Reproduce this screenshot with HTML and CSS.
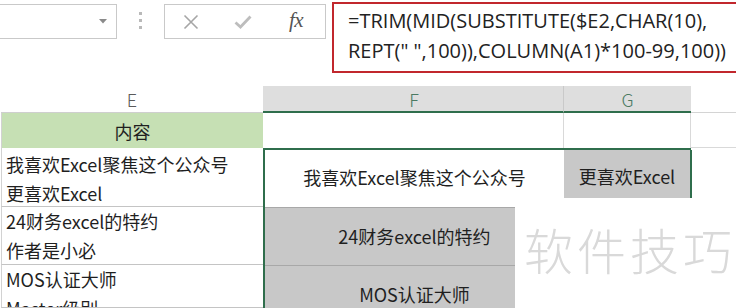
FILE: index.html
```html
<!DOCTYPE html>
<html lang="zh-CN">
<head>
<meta charset="utf-8">
<title>Excel</title>
<link rel="stylesheet" href="styles.css">
</head>
<body>
<div class="page">
  <div class="fbar">
    <div class="namebox">
      <svg class="arrow" width="8" height="5" viewBox="0 0 8 5"><path d="M0 0H8L4 4.5Z" fill="#8a8a8a"/></svg>
    </div>
    <div class="dots"><i></i><i></i><i></i></div>
    <div class="btns">
      <svg class="ico-x" width="16" height="16" viewBox="0 0 16 16"><path d="M1.5 1.5L14.5 14.5M14.5 1.5L1.5 14.5" stroke="#a6a6a6" stroke-width="1.6" fill="none"/></svg>
      <svg class="ico-ok" width="18" height="14" viewBox="0 0 18 14"><path d="M1.5 7.5L6.5 12L16.5 1.5" stroke="#bdbdbd" stroke-width="2.8" fill="none"/></svg>
      <span class="fx">fx</span>
    </div>
    <div class="formula">
      <div>=TRIM(MID(SUBSTITUTE($E2,CHAR(10),</div>
      <div>REPT(" ",100)),COLUMN(A1)*100-99,100))</div>
    </div>
  </div>
  <div class="sheet">
    <div class="hd hd-e">E</div>
    <div class="hd hd-sel hd-f">F</div>
    <div class="hd hd-sel hd-g">G</div>
    <div class="hd hd-rest"></div>

    <div class="c e-title">内容</div>
    <div class="c r1-f"></div>
    <div class="c r1-g"></div>
    <div class="c r1-rest"></div>

    <div class="c e-txt e-r2"><div>我喜欢Excel聚焦这个公众号</div><div>更喜欢Excel</div></div>
    <div class="c r2-f">我喜欢Excel聚焦这个公众号</div>
    <div class="c r2-g"><div class="g-fill">更喜欢Excel</div></div>
    <div class="c"></div>

    <div class="c e-txt"><div>24财务excel的特约</div><div>作者是小必</div></div>
    <div class="c f-gray">24财务excel的特约</div>
    <div class="c"></div>
    <div class="c"></div>

    <div class="c e-txt"><div>MOS认证大师</div><div>Master级别</div></div>
    <div class="c f-gray">MOS认证大师</div>
    <div class="c"></div>
    <div class="c"></div>
  </div>
  <div class="watermark">软件技巧</div>
</div>
</body>
</html>
```
FILE: styles.css
```css
html, body {
  margin: 0;
  padding: 0;
  background: #fff;
}
body {
  width: 736px;
  height: 308px;
  overflow: hidden;
  font-family: "Noto Sans CJK SC", "Noto Sans", sans-serif;
  color: #1f1f1f;
}
.page {
  position: relative;
  width: 736px;
  height: 308px;
  overflow: hidden;
}
.fbar {
  height: 86px;
  display: flex;
  align-items: flex-start;
}
.fbar > * {
  flex: none;
}
.namebox {
  margin-top: 4px;
  width: 107px;
  height: 33px;
  border: 1px solid #c9c9c9;
  border-left: none;
  display: flex;
  align-items: center;
  justify-content: flex-end;
  padding-right: 9px;
}
.dots {
  margin-left: 22px;
  margin-top: 12px;
  display: flex;
  flex-direction: column;
  gap: 4px;
}
.dots i {
  display: block;
  width: 3px;
  height: 3px;
  background: #b9b9b9;
}
.btns {
  margin-left: 22px;
  margin-top: 4px;
  width: 160px;
  height: 33px;
  border: 1px solid #c9c9c9;
  position: relative;
}
.ico-x { position: absolute; left: 18px; top: 9px; }
.ico-ok { position: absolute; left: 69px; top: 10px; }
.fx {
  position: absolute;
  left: 124px;
  top: 3px;
  font-family: "Liberation Serif", "DejaVu Serif", serif;
  font-style: italic;
  font-size: 21px;
  color: #555;
  letter-spacing: -0.5px;
}
.formula {
  margin-left: 6px;
  margin-top: 2px;
  height: 65px;
  width: 500px;
  border: 2px solid #c1272d;
  border-right: none;
  padding: 2px 0 0 14px;
  font-family: "Open Sans", "Noto Sans", sans-serif;
  font-size: 20px;
  line-height: 30px;
  white-space: nowrap;
  color: #222;
}
.sheet {
  display: grid;
  grid-template-columns: 262px 301px 127px 46px;
  grid-template-rows: 27px 35px 59px 58px 43px;
  padding-left: 1px;
}
.hd {
  font-size: 18px;
  font-weight: 300;
  color: #5a5a5a;
  display: flex;
  align-items: center;
  justify-content: center;
  box-sizing: border-box;
  line-height: 1;
}
.hd-e {
  border-bottom: 1px solid #cfcfcf;
}
.hd-sel {
  background: #dedede;
  border-bottom: 2px solid #2f6e4c;
  color: #4b7a62;
}
.hd-f {
  border-right: 1px solid #c9c9c9;
  padding-left: 2px;
}
.hd-rest {
  border-bottom: 1px solid #d4d4d4;
}
.c {
  box-sizing: border-box;
  font-size: 18px;
}
.e-title {
  background: #c6e0b4;
  display: flex;
  align-items: center;
  justify-content: center;
  border-left: 1px solid #d2d2d2;
}
.r1-f {
  border-right: 1px solid #d9d9d9;
}
.r1-g {
  border-right: 1px solid #d9d9d9;
}
.r1-rest {
  border-bottom: 1px solid #d9d9d9;
}
.e-txt {
  border-left: 1px solid #d2d2d2;
  border-bottom: 1px solid #c4c4c4;
  padding-left: 4px;
  line-height: 29px;
  white-space: nowrap;
  overflow: hidden;
}
.e-r2 {
  padding-top: 2px;
}
.r2-f {
  border-top: 2px solid #2f6e4c;
  border-left: 2px solid #2f6e4c;
  display: flex;
  align-items: flex-start;
  justify-content: center;
  padding-top: 17px;
  line-height: 1.2;
}
.r2-g {
  align-self: start;
  border-top: 2px solid #2f6e4c;
}
.g-fill {
  height: 48px;
  background: #c8c8c8;
  border-right: 2px solid #2f6e4c;
  display: flex;
  align-items: flex-start;
  justify-content: center;
  box-sizing: border-box;
  margin-right: -1px;
  padding-top: 16px;
  line-height: 1.2;
}
.f-gray {
  border-left: 2px solid #2f6e4c;
  background:
    linear-gradient(#a8a8a8, #a8a8a8) 0 0 / 250px 1px no-repeat,
    linear-gradient(#c8c8c8, #c8c8c8) 0 0 / 250px 100% no-repeat;
  display: flex;
  align-items: flex-start;
  justify-content: center;
  padding-top: 19px;
  line-height: 1.2;
}
.watermark {
  position: absolute;
  left: 524px;
  top: 224px;
  font-size: 49px;
  line-height: 1;
  color: #d9d9d9;
  font-weight: 300;
  letter-spacing: 4px;
  white-space: nowrap;
}
```
